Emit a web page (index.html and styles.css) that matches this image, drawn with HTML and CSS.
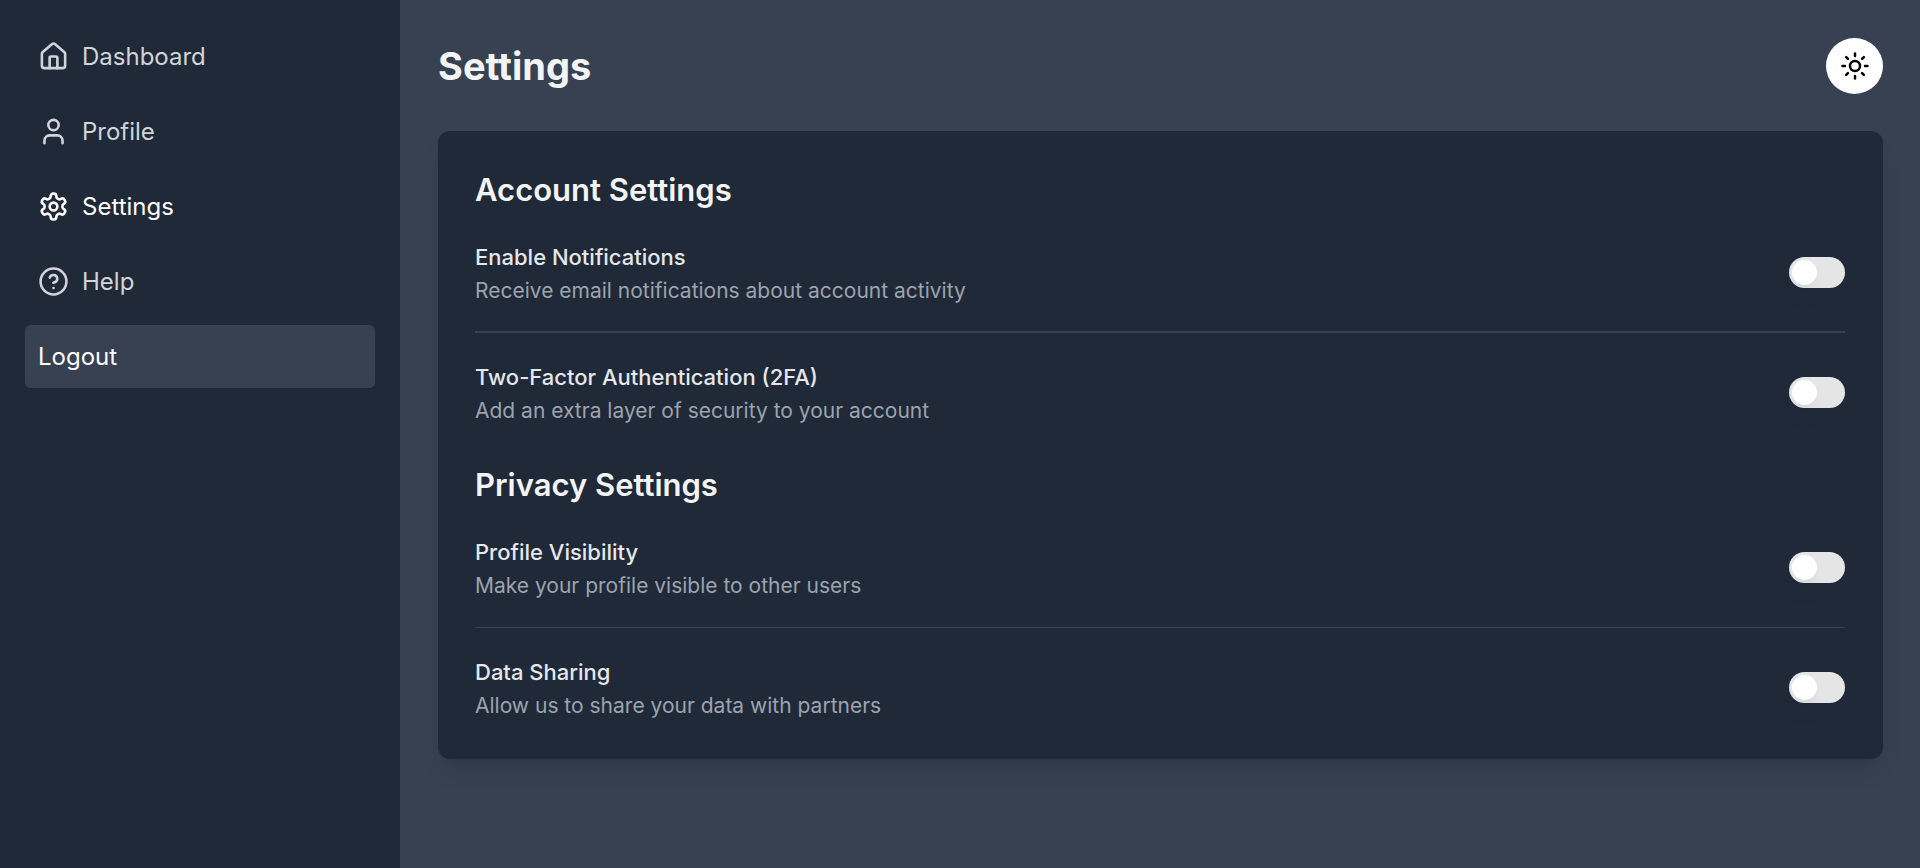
FILE: index.html
```html
<!DOCTYPE html>
<html lang="en">
<head>
<meta charset="utf-8">
<title>Settings</title>
<link rel="stylesheet" href="styles.css">
</head>
<body>
<div class="app">
  <nav class="sidebar" aria-label="Main">
    <a class="nav-item" href="#dashboard">
      <svg class="icon" viewBox="0 0 24 24"><path d="M15 21v-8a1 1 0 0 0-1-1h-4a1 1 0 0 0-1 1v8"/><path d="M3 10a2 2 0 0 1 .709-1.528l7-5.999a2 2 0 0 1 2.582 0l7 5.999A2 2 0 0 1 21 10v9a2 2 0 0 1-2 2H5a2 2 0 0 1-2-2z"/></svg>
      Dashboard</a>
    <a class="nav-item" href="#profile">
      <svg class="icon" viewBox="0 0 24 24"><path d="M19 21v-2a4 4 0 0 0-4-4H9a4 4 0 0 0-4 4v2"/><circle cx="12" cy="7" r="4"/></svg>
      Profile</a>
    <a class="nav-item nav-item-active" href="#settings" aria-current="page">
      <svg class="icon" viewBox="0 0 24 24"><path d="M12.220 2h-.44a2 2 0 0 0-2 2v.18a2 2 0 0 1-1 1.730l-.43.25a2 2 0 0 1-2 0l-.15-.08a2 2 0 0 0-2.730.730l-.22.380a2 2 0 0 0 .730 2.730l.15.1a2 2 0 0 1 1 1.720v.510a2 2 0 0 1-1 1.740l-.15.09a2 2 0 0 0-.730 2.730l.22.380a2 2 0 0 0 2.730.730l.15-.08a2 2 0 0 1 2 0l.43.25a2 2 0 0 1 1 1.730V20a2 2 0 0 0 2 2h.44a2 2 0 0 0 2-2v-.18a2 2 0 0 1 1-1.730l.43-.25a2 2 0 0 1 2 0l.15.080a2 2 0 0 0 2.730-.730l.22-.390a2 2 0 0 0-.730-2.730l-.15-.080a2 2 0 0 1-1-1.740v-.5a2 2 0 0 1 1-1.740l.15-.09a2 2 0 0 0 .730-2.730l-.22-.380a2 2 0 0 0-2.730-.730l-.15.080a2 2 0 0 1-2 0l-.43-.25a2 2 0 0 1-1-1.730V4a2 2 0 0 0-2-2z"/><circle cx="12" cy="12" r="3"/></svg>
      Settings</a>
    <a class="nav-item" href="#help">
      <svg class="icon" viewBox="0 0 24 24"><circle cx="12" cy="12" r="10"/><path d="M9.090 9a3 3 0 0 1 5.830 1c0 2-3 3-3 3"/><path d="M12 17h.01"/></svg>
      Help</a>
    <button class="nav-item nav-button" type="button">Logout</button>
  </nav>
  <main class="main">
    <header class="header">
      <h1 class="title">Settings</h1>
      <button class="theme-button" type="button" aria-label="Toggle theme">
        <svg class="icon icon-theme" viewBox="0 0 24 24"><circle cx="12" cy="12" r="4"/><path d="M12 2v2"/><path d="M12 20v2"/><path d="m4.930 4.930 1.410 1.410"/><path d="m17.660 17.660 1.410 1.410"/><path d="M2 12h2"/><path d="M20 12h2"/><path d="m6.340 17.660-1.410 1.410"/><path d="m19.070 4.930-1.410 1.410"/></svg>
      </button>
    </header>
    <div class="card">
      <section>
        <h2 class="section-title">Account Settings</h2>
        <div class="row">
          <div><label class="label" for="notifications">Enable Notifications</label><p class="hint">Receive email notifications about account activity</p></div>
          <input class="toggle" type="checkbox" role="switch" id="notifications">
        </div>
        <hr class="divider divider-strong">
        <div class="row">
          <div><label class="label" for="two-factor">Two-Factor Authentication (2FA)</label><p class="hint">Add an extra layer of security to your account</p></div>
          <input class="toggle" type="checkbox" role="switch" id="two-factor">
        </div>
      </section>
      <section>
        <h2 class="section-title">Privacy Settings</h2>
        <div class="row">
          <div><label class="label" for="visibility">Profile Visibility</label><p class="hint">Make your profile visible to other users</p></div>
          <input class="toggle" type="checkbox" role="switch" id="visibility">
        </div>
        <hr class="divider">
        <div class="row">
          <div><label class="label" for="sharing">Data Sharing</label><p class="hint">Allow us to share your data with partners</p></div>
          <input class="toggle" type="checkbox" role="switch" id="sharing">
        </div>
      </section>
    </div>
  </main>
</div>
</body>
</html>
```
FILE: styles.css
```css
* { box-sizing: border-box; }

body {
  margin: 0;
  font-family: Inter, "Liberation Sans", sans-serif;
  background: #374151;
  color: #f3f4f6;
}

.app {
  display: flex;
  min-height: 100vh;
}

.sidebar {
  display: flex;
  flex-direction: column;
  gap: 12px;
  flex: 0 0 400px;
  padding: 25px;
  background: #1f2937;
}

.nav-item {
  display: flex;
  align-items: center;
  gap: 13px;
  height: 63px;
  padding: 0 13px;
  border-radius: 6px;
  color: #d1d5db;
  font-size: 24px;
  line-height: 38px;
  text-decoration: none;
}

.nav-item-active { color: #fff; }

.nav-button {
  border: 0;
  background: #374151;
  color: #fff;
  font-family: inherit;
  text-align: left;
  cursor: pointer;
}

.icon {
  flex: none;
  width: 31px;
  height: 31px;
  fill: none;
  stroke: currentColor;
  stroke-width: 2;
  stroke-linecap: round;
  stroke-linejoin: round;
}

.main {
  flex: 1;
  min-width: 0;
  padding: 38px 37px 38px 38px;
}

.header {
  display: flex;
  align-items: center;
  justify-content: space-between;
  margin-bottom: 37px;
}

.title {
  margin: 0;
  font-size: 38px;
  line-height: 44px;
  font-weight: 700;
}

.theme-button {
  display: grid;
  place-items: center;
  width: 57px;
  height: 56px;
  padding: 0;
  border: 0;
  border-radius: 50%;
  background: #fff;
  color: #000;
  cursor: pointer;
}

.icon-theme {
  width: 30px;
  height: 30px;
}

.card {
  display: flex;
  flex-direction: column;
  gap: 36px;
  padding: 37px 38px 37px 37px;
  border-radius: 12px;
  background: #1f2937;
  box-shadow: 0 16px 23px -5px rgb(0 0 0 / 10%), 0 6px 9px -6px rgb(0 0 0 / 10%);
}

.section-title {
  margin: 0 0 29px;
  font-size: 31px;
  line-height: 44px;
  font-weight: 600;
}

.row {
  display: flex;
  align-items: flex-start;
  justify-content: space-between;
  gap: 24px;
}

.label {
  display: block;
  color: #e5e7eb;
  font-size: 22px;
  line-height: 33px;
  font-weight: 500;
}

.hint {
  margin: 0;
  color: #9ca3af;
  font-size: 21px;
  line-height: 33px;
}

.divider {
  height: 1px;
  margin: 25px 0 28px;
  border: 0;
  background: #374151;
}

.divider-strong {
  height: 2px;
  margin-top: 24px;
}

.toggle {
  appearance: none;
  flex: none;
  display: flex;
  align-items: center;
  width: 56px;
  height: 31px;
  margin: 16px 0 0;
  padding: 3px;
  border-radius: 16px;
  background: #e5e5e5;
  cursor: pointer;
}

.toggle::before {
  content: "";
  width: 25px;
  height: 25px;
  border-radius: 50%;
  background: #fff;
  box-shadow: 0 16px 23px -5px rgb(0 0 0 / 10%), 0 6px 9px -6px rgb(0 0 0 / 10%);
}

.toggle:checked { background: #6b7280; }
.toggle:checked::before { margin-left: 25px; }
```
